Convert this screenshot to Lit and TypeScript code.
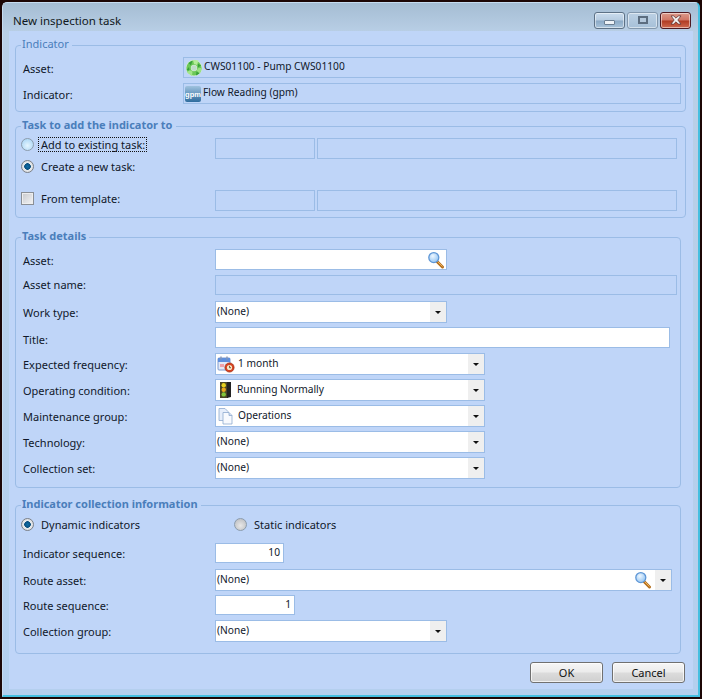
import { LitElement, html, css } from "lit";
import { customElement } from "lit/decorators.js";

const magnifier = html`<svg class="mag" width="18" height="18" viewBox="0 0 18 18">
  <defs><radialGradient id="gl" cx="0.4" cy="0.35" r="0.7"><stop offset="0" stop-color="#eef7ff"/><stop offset="1" stop-color="#8fc2f2"/></radialGradient></defs>
  <path d="M10 10.5 L15.5 16" stroke="#b5701f" stroke-width="3" stroke-linecap="round"/>
  <path d="M10.5 10.5 L15.5 15.5" stroke="#efb45c" stroke-width="1"/>
  <circle cx="6.8" cy="6.6" r="5" fill="url(#gl)" stroke="#5f97d6" stroke-width="1.3"/>
</svg>`;

const recycle = html`<svg width="18" height="18" viewBox="0 0 18 18">
  <circle cx="9" cy="9" r="8.2" fill="#d4f0c8" opacity=".8"/>
  <circle cx="9" cy="9" r="5.4" fill="none" stroke="#6cc858" stroke-width="4.4"/>
  <circle cx="9" cy="9" r="2.6" fill="#bfdcc8"/>
  <path d="M8 1 L13.5 1.5 L12 6 L9 5z" fill="#b4ec98"/>
  <path d="M17 9 L15 14.5 L11.5 11.5 L13.5 9z" fill="#9ce283"/>
  <path d="M2 13.5 L7 17 L7.5 12.5 L4.5 11z" fill="#a2e58a"/>
  <path d="M7.5 1.5 L3.5 4 L6 6.5z" fill="#37a03a"/>
  <path d="M16 6.5 L13 4.8 L13 8.5z" fill="#37a03a"/>
  <path d="M11 16.5 L14.5 14.5 L11.5 12.5z" fill="#37a03a"/>
  <path d="M1.5 11 L4.5 11.5 L4 8z" fill="#37a03a"/>
</svg>`;

const calendarClock = html`<svg width="18" height="18" viewBox="0 0 18 18">
  <rect x="1" y="3" width="12" height="12" rx="1" fill="#e2e9f7" stroke="#7c9ad0"/>
  <rect x="1" y="3" width="12" height="4" fill="#5f8fdc"/>
  <rect x="3" y="9" width="4" height="3" fill="#f0a0a8"/>
  <path d="M4 1.5v3M10 1.5v3" stroke="#8696b4" stroke-width="1.4"/>
  <circle cx="12.5" cy="12.5" r="4.6" fill="#d8421f" stroke="#9c2a12" stroke-width=".7"/>
  <circle cx="12.5" cy="12.5" r="2.6" fill="#f4e6c8"/>
  <path d="M12.5 10.8v1.9h1.5" stroke="#5b3a15" stroke-width=".8" fill="none"/>
</svg>`;

const traffic = html`<svg width="17" height="18" viewBox="0 0 17 18">
  <rect x="3" y="1" width="8" height="16" fill="#4a4526"/>
  <path d="M10 1h4v15l-4 1z" fill="#222"/>
  <circle cx="6.7" cy="4.2" r="2.2" fill="#e6d21f"/>
  <circle cx="6.7" cy="8.8" r="2.2" fill="#eaa81e"/>
  <circle cx="6.7" cy="13.4" r="2.2" fill="#83c53a"/>
</svg>`;

const pages = html`<svg width="18" height="18" viewBox="0 0 18 18">
  <path d="M2 1.5h6l3 3v9H2z" fill="#e6eefb" stroke="#8ea9cf" stroke-width=".8"/>
  <path d="M6 5.5h6l3 3v8.5H6z" fill="#f8fafe" stroke="#8ea9cf" stroke-width=".8"/>
  <path d="M12 5.5v3h3" fill="#cfdcf0" stroke="#8ea9cf" stroke-width=".8"/>
</svg>`;

const gpm = html`<svg width="16" height="16" viewBox="0 0 16 16">
  <defs><linearGradient id="gp" x1="0" y1="0" x2="0" y2="1"><stop offset="0" stop-color="#9fc2de"/><stop offset="1" stop-color="#2f6c9e"/></linearGradient></defs>
  <rect x="0" y="0" width="16" height="16" rx="2" fill="url(#gp)"/>
  <text x="8" y="10.5" text-anchor="middle" font-family="Liberation Sans, sans-serif" font-size="7.5" font-weight="700" fill="#fff">gpm</text>
</svg>`;

@customElement("app-root")
export class AppRoot extends LitElement {
  static styles = css`
    :host {
      display: block;
      width: 702px;
      height: 699px;
      overflow: hidden;
      background: #1c0605;
      font-family: "Noto Sans", "Open Sans", sans-serif;
      font-size: 11px;
      color: #10182a;
    }
    * { box-sizing: border-box; }
    .window {
      width: 698px;
      height: 695px;
      margin: 2px 2px 0 2px;
      display: flex;
      flex-direction: column;
      background: linear-gradient(#a5bdd3 0, #b9cfe6 30px, #b4cfee 100%);
      border: 1px solid #c6dcf0;
      border-right: 2px solid #45bfe0;
      border-bottom: 2px solid #45bfe0;
      border-radius: 5px 5px 0 0;
    }
    .titlebar {
      height: 28px;
      flex: none;
      display: flex;
      align-items: center;
      justify-content: space-between;
      padding: 6px 7px 0 10px;
    }
    .title { font-size: 11.5px; color: #101820; }
    .caption { display: flex; gap: 2px; }
    .cbtn {
      width: 31px;
      height: 17px;
      border: 1px solid #5d7186;
      border-radius: 3px;
      background: linear-gradient(#cadcee 0, #b6cbe0 48%, #8ba9c6 52%, #a9c3da 100%);
      display: flex;
      align-items: center;
      justify-content: center;
      box-shadow: inset 0 0 0 1px rgba(255,255,255,.5);
    }
    .cbtn.off { border-color: #8297ad; background: linear-gradient(#bcd0e4, #a6c0d8); }
    .cbtn.close {
      border-color: #4e1a22;
      background: linear-gradient(#dc9a8c 0, #cf7564 48%, #b03a22 52%, #cf6a50 100%);
    }
    .g-min { width: 11px; height: 5px; background: #eef2f7; border: 1px solid #6b7e92; margin-top: 5px; border-radius: 1px; }
    .g-max { width: 10px; height: 8px; border: 2px solid #5c6d80; background: #b4c8dc; }
    .client {
      flex: 1;
      margin: 0 5px 6px 6px;
      background: #bfd5f8;
      padding: 7px 0 0 6px;
      display: flex;
      flex-direction: column;
    }
    fieldset {
      margin: 0;
      padding: 0;
      border: 1px solid #9bbce6;
      border-radius: 4px;
      min-width: 0;
    }
    legend {
      padding: 0 3px 2px 1px;
      font-size: 11px;
      font-weight: 700;
      color: #4a7ebb;
      line-height: 12px;
      height: 14px;
    }
    legend.plain { font-weight: 400; }
    .g1 { width: 671px; height: 74px; margin: 0; padding: 5px 4px 0 7px; }
    .g1 legend { margin-left: -2px; }
    .g2 { width: 671px; height: 99px; margin-top: 7px; padding: 1px 7px 0 4px; }
    .g2 legend, .g4 legend { margin-left: 1px; }
    .g3 { width: 666px; height: 258px; margin-top: 12px; padding: 5px 3px 0 7px; }
    .g3 legend { margin-left: -2px; }
    .g4 { width: 666px; height: 156px; margin-top: 10px; padding: 2px 8px 0 4px; }

    .row { display: grid; align-items: center; }
    .g1 .row { grid-template-columns: 160px 1fr; height: 21px; margin-bottom: 5px; }
    .g1 .row > span { padding-top: 1px; }
    .ro {
      height: 21px;
      border: 1px solid #9bbce6;
      background: #bfd5f8;
      display: flex;
      align-items: center;
      gap: 1px;
      padding: 0 0 3px 1px;
      font-size: 10.2px;
    }
    .ro.gp { gap: 2px; }
    .ro svg { flex: none; margin-top: 3px; }
    .g3 .row { grid-template-columns: 192px 1fr; margin-bottom: 4px; }
    .g3 .row.m5 { margin-bottom: 5px; }
    .g3 .row.m6 { margin-bottom: 6px; }
    .g3 .row > span.high { padding-top: 2px; }
    .g3 .row > span.flat { padding-bottom: 2px; }
    .g3 .row > span.low { padding-top: 4px; }
    .g4 .row { grid-template-columns: 192px 1fr; margin-left: 3px; }
    .g4 .row.r1 { margin-top: 8px; margin-bottom: 6px; }
    .g4 .row.r2 { margin-bottom: 4px; }
    .g4 .row.r3 { margin-bottom: 5px; }

    .input, .combo {
      border: 1px solid #9bbce6;
      background: #fff;
      display: flex;
      align-items: center;
    }
    .input { height: 21px; }
    .combo { height: 22px; padding-left: 1px; }
    .combo .val { flex: 1; display: flex; align-items: center; gap: 3px; padding-bottom: 2px; font-size: 10.2px; min-width: 0; }
    .combo .val svg { flex: none; margin-top: 2px; }
    .arrow {
      width: 16px;
      align-self: stretch;
      background: #efefef;
      display: flex;
      align-items: center;
      justify-content: center;
      flex: none;
    }
    .arrow::after {
      content: "";
      border: 3px solid transparent;
      border-top: 3px solid #111;
      border-bottom: 0;
    }
    .mag { flex: none; }
    .magbox { justify-content: flex-end; padding-right: 1px; }
    .combo .mag { margin-right: 3px; }
    .right { justify-content: flex-end; padding-right: 3px; padding-bottom: 2px; height: 20px; font-size: 10.2px; }
    .w232 { width: 232px; }
    .w270 { width: 270px; }
    .w69 { width: 69px; }
    .w80 { width: 80px; }
    .w455 { width: 455px; }
    .disabled { background: #bfd5f8; height: 20px; width: 462px; }

    .task-grid {
      display: grid;
      grid-template-columns: 193px 100px 360px;
      column-gap: 2px;
      align-items: start;
    }
    .task-grid.t1 { height: 22px; }
    .task-grid.t1 .ghost { margin-top: 4px; }
    .task-grid.t3 { margin-top: 11px; }
    .task-grid.t3 .ghost { margin-top: 2px; }
    .task-grid.radios { grid-template-columns: 211px 1fr; }
    .ghost { height: 21px; border: 1px solid #9bbce6; }
    .opt { display: flex; align-items: center; gap: 7px; height: 21px; }
    .focus { outline: 1px dotted #111; outline-offset: 0; padding: 0 1px 0 2px; margin-left: -2px; line-height: 13px; }
    .radio {
      width: 13px; height: 13px; border-radius: 50%;
      margin-left: 1px;
      border: 1px solid #8c9cac;
      flex: none;
      background: radial-gradient(circle at 50% 60%, #e4f5ff, #9fd0f4);
    }
    .radio.on {
      background: radial-gradient(circle, #0d6ea8 0, #0a4f80 3px, #e8eaec 3.6px, #cfd3d8 100%);
      border-color: #7c8086;
    }
    .radio.gray {
      background: radial-gradient(circle at 50% 60%, #e8e8e8, #b6b8bc);
    }
    .check {
      width: 13px; height: 13px; flex: none;
      margin-left: 1px;
      border: 1px solid #8a8f96;
      background: linear-gradient(135deg, #c7c9cd, #f4f4f5);
      box-shadow: inset 0 0 0 1px #eee;
    }
    .footer {
      display: flex;
      justify-content: flex-end;
      gap: 9px;
      width: 670px;
      margin-top: 8px;
    }
    .btn {
      width: 73px;
      height: 21px;
      border: 1px solid #707070;
      border-radius: 3px;
      background: linear-gradient(#f6f6f6 0, #ebebeb 48%, #dcdcdc 52%, #cfcfcf 100%);
      box-shadow: inset 0 0 0 1px rgba(255,255,255,.7);
      font: inherit;
      color: #111;
      padding: 0;
    }
  `;

  combo(value: unknown, cls: string, icon?: unknown, extra?: unknown) {
    return html`<div class="combo ${cls}">
      <div class="val">${icon}<span>${value}</span></div>${extra}<div class="arrow"></div>
    </div>`;
  }

  render() {
    return html`<div class="window">
      <div class="titlebar">
        <span class="title">New inspection task</span>
        <div class="caption">
          <div class="cbtn"><div class="g-min"></div></div>
          <div class="cbtn off"><div class="g-max"></div></div>
          <div class="cbtn close">
            <svg width="12" height="10" viewBox="0 0 13 11"><path d="M1 1h3l2.5 2.5L9 1h3L8.5 5.5 12 10H9L6.5 7.5 4 10H1l3.5-4.5z" fill="#f3f3f3" stroke="#5a3030" stroke-width=".8"/></svg>
          </div>
        </div>
      </div>
      <div class="client">
        <fieldset class="g1">
          <legend class="plain">Indicator</legend>
          <div class="row"><span>Asset:</span><div class="ro">${recycle}<span>CWS01100 - Pump CWS01100</span></div></div>
          <div class="row"><span>Indicator:</span><div class="ro gp">${gpm}<span>Flow Reading (gpm)</span></div></div>
        </fieldset>

        <fieldset class="g2">
          <legend>Task to add the indicator to</legend>
          <div class="task-grid t1">
            <div class="opt"><span class="radio"></span><span class="focus">Add to existing task:</span></div>
            <div class="ghost"></div><div class="ghost"></div>
          </div>
          <div class="task-grid">
            <div class="opt"><span class="radio on"></span><span>Create a new task:</span></div>
          </div>
          <div class="task-grid t3">
            <div class="opt"><span class="check"></span><span>From template:</span></div>
            <div class="ghost"></div><div class="ghost"></div>
          </div>
        </fieldset>

        <fieldset class="g3">
          <legend>Task details</legend>
          <div class="row m5"><span class="high">Asset:</span><div class="input w232 magbox">${magnifier}</div></div>
          <div class="row m6"><span class="flat">Asset name:</span><div class="input disabled"></div></div>
          <div class="row"><span>Work type:</span>${this.combo("(None)", "w232")}</div>
          <div class="row m5"><span class="low">Title:</span><div class="input w455"></div></div>
          <div class="row"><span>Expected frequency:</span>${this.combo("1 month", "w270", calendarClock)}</div>
          <div class="row"><span>Operating condition:</span>${this.combo("Running Normally", "w270", traffic)}</div>
          <div class="row"><span>Maintenance group:</span>${this.combo("Operations", "w270", pages)}</div>
          <div class="row"><span>Technology:</span>${this.combo("(None)", "w270")}</div>
          <div class="row"><span>Collection set:</span>${this.combo("(None)", "w270")}</div>
        </fieldset>

        <fieldset class="g4">
          <legend>Indicator collection information</legend>
          <div class="task-grid radios">
            <div class="opt"><span class="radio on"></span><span>Dynamic indicators</span></div>
            <div class="opt"><span class="radio gray"></span><span>Static indicators</span></div>
          </div>
          <div class="row r1"><span>Indicator sequence:</span><div class="input right w69">10</div></div>
          <div class="row r2"><span>Route asset:</span>${this.combo("(None)", "", undefined, magnifier)}</div>
          <div class="row r3"><span>Route sequence:</span><div class="input right w80">1</div></div>
          <div class="row"><span>Collection group:</span>${this.combo("(None)", "w232")}</div>
        </fieldset>

        <div class="footer">
          <button class="btn">OK</button>
          <button class="btn">Cancel</button>
        </div>
      </div>
    </div>`;
  }
}
